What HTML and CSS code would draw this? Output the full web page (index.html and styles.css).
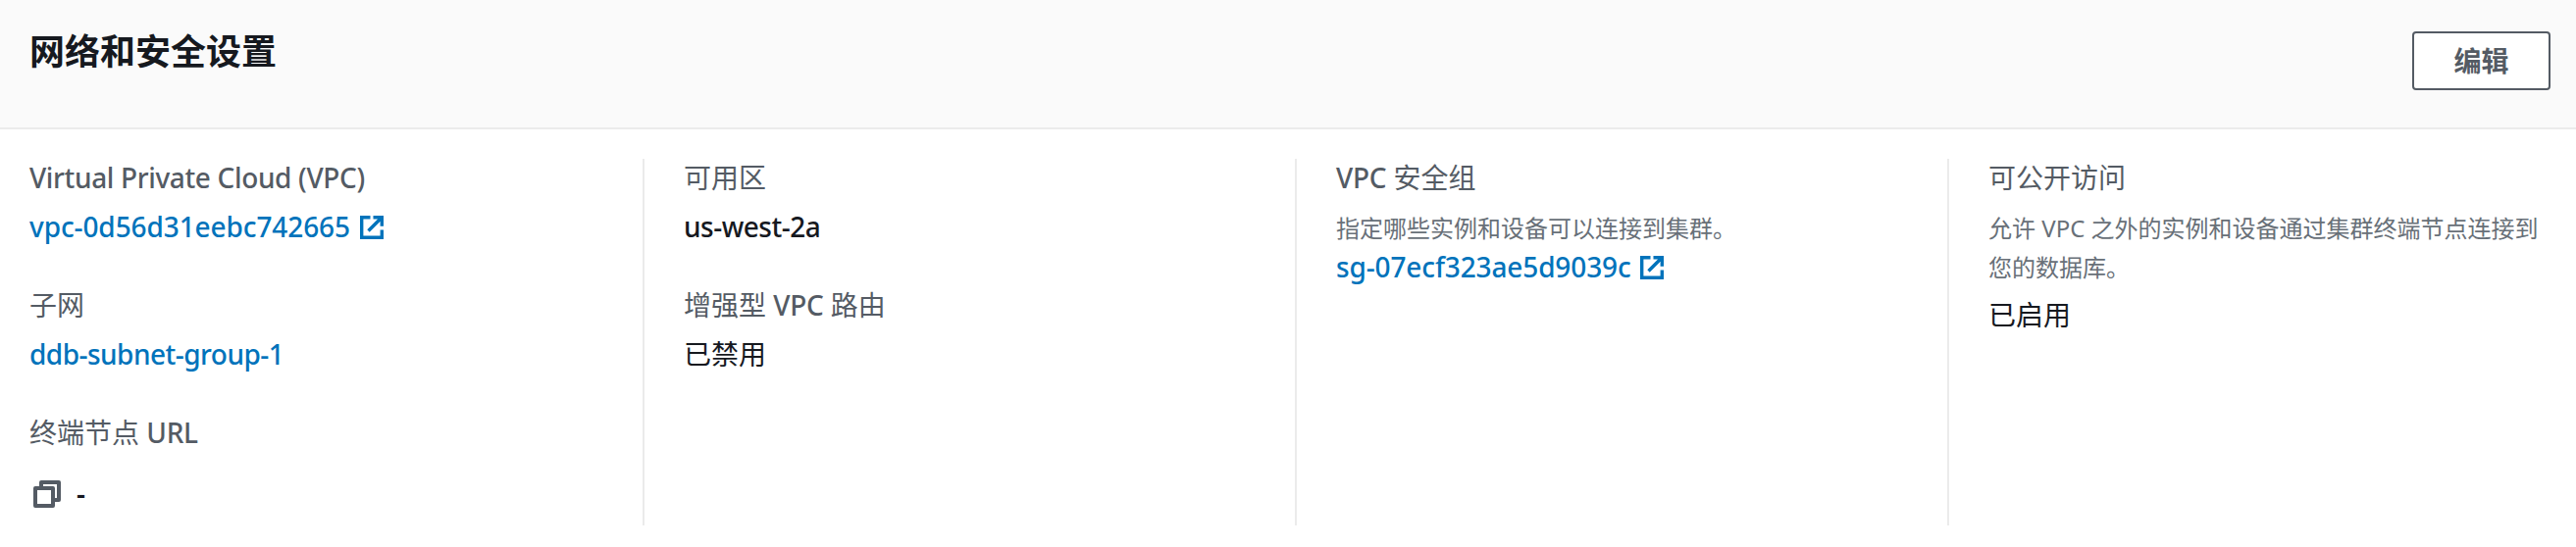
FILE: index.html
```html
<!DOCTYPE html>
<html lang="zh-CN">
<head>
<meta charset="utf-8">
<title>网络和安全设置</title>
<link rel="stylesheet" href="styles.css">
</head>
<body>
<section class="panel">
  <header class="panel-header">
    <h2 class="panel-title">网络和安全设置</h2>
    <button class="button" type="button">编辑</button>
  </header>
  <div class="columns">
    <div class="column">
      <div class="field">
        <div class="label label-latin">Virtual Private Cloud (VPC)</div>
        <div class="value"><a class="link link-vpc">vpc-0d56d31eebc742665</a><svg class="external" viewBox="0 0 24 24"><path d="M10.500 1.700H1.700v20.600h20.600V14.500M13.500 1.700h8.800v9M22 2L8.500 15.500"/></svg></div>
      </div>
      <div class="field">
        <div class="label">子网</div>
        <div class="value"><a class="link link-subnet">ddb-subnet-group-1</a></div>
      </div>
      <div class="field">
        <div class="label">终端节点 <span class="abbr">URL</span></div>
        <div class="value value-copy"><svg class="copy" viewBox="0 0 28 28"><path d="M2 8h18v18H2zM8 8V2h18v18h-6"/></svg><span class="dash">-</span></div>
      </div>
    </div>
    <div class="column">
      <div class="field">
        <div class="label">可用区</div>
        <div class="value"><span class="zone">us-west-2a</span></div>
      </div>
      <div class="field">
        <div class="label">增强型 <span class="abbr">VPC</span> 路由</div>
        <div class="value">已禁用</div>
      </div>
    </div>
    <div class="column">
      <div class="field">
        <div class="label"><span class="abbr">VPC</span> 安全组</div>
        <div class="description">指定哪些实例和设备可以连接到集群。</div>
        <div class="value value-tight"><a class="link link-sg">sg-07ecf323ae5d9039c</a><svg class="external" viewBox="0 0 24 24"><path d="M10.500 1.700H1.700v20.600h20.600V14.500M13.500 1.700h8.800v9M22 2L8.500 15.500"/></svg></div>
      </div>
    </div>
    <div class="column">
      <div class="field">
        <div class="label">可公开访问</div>
        <div class="description">允许 VPC 之外的实例和设备通过集群终端节点连接到您的数据库。</div>
        <div class="value">已启用</div>
      </div>
    </div>
  </div>
</section>
</body>
</html>
```
FILE: styles.css
```css
* { box-sizing: border-box; }
body {
  margin: 0;
  background: #fff;
  color: #16191f;
  font: 28px/40px "Noto Sans", "Noto Sans CJK SC", sans-serif;
}
.panel { display: flex; flex-direction: column; height: 558px; overflow: hidden; }
.panel-header {
  display: flex;
  justify-content: space-between;
  align-items: flex-start;
  height: 132px;
  padding: 32px 26px 0 30px;
  background: #fafafa;
  border-bottom: 2px solid #ebebeb;
}
.panel-title { margin: 0; font-size: 36px; line-height: 42px; font-weight: 700; }
.button {
  width: 141px;
  height: 60px;
  padding: 0;
  border: 2px solid #545b64;
  border-radius: 4px;
  background: #fff;
  color: #545b64;
  font: 700 28px/40px "Noto Sans", "Noto Sans CJK SC", sans-serif;
}
.columns {
  flex: 1;
  display: grid;
  grid-template-columns: 655px 665px 665px 1fr;
  padding: 30px 0 22px;
}
.column {
  display: flex;
  flex-direction: column;
  gap: 40px;
  padding: 0 30px 0 40px;
  border-left: 2px solid #ebebeb;
}
.column:first-child { padding-left: 30px; border-left: 0; }
.label { height: 40px; line-height: 38px; color: #545b64; white-space: nowrap; }
.label-latin { font-weight: 500; letter-spacing: -0.35px; }
.abbr { font-weight: 500; letter-spacing: -0.3px; }
.value { display: flex; align-items: center; height: 40px; margin-top: 10px; line-height: 38px; padding-bottom: 2px; white-space: nowrap; }
.value-tight { margin-top: 0; padding-bottom: 0; }
.value-copy { margin-top: 22px; padding: 0 0 0 4px; gap: 16px; }
.description { margin: 10px 0 -1px; padding-top: 1px; color: #687078; font-size: 24px; line-height: 40px; }
.link { color: #0073bb; font-weight: 500; }
.link-vpc { letter-spacing: -0.1px; }
.link-subnet { letter-spacing: -0.52px; }
.link-sg { letter-spacing: -0.13px; }
.zone { font-weight: 500; letter-spacing: -0.5px; }
.dash { font-weight: 600; margin-top: -2px; }
.external { width: 24px; height: 24px; margin: 2px 0 0 10px; fill: none; stroke: #0073bb; stroke-width: 3.400; }
.link-sg + .external { margin-left: 9px; }
.copy { width: 28px; height: 28px; fill: none; stroke: #545b64; stroke-width: 4; stroke-linejoin: round; }
```
